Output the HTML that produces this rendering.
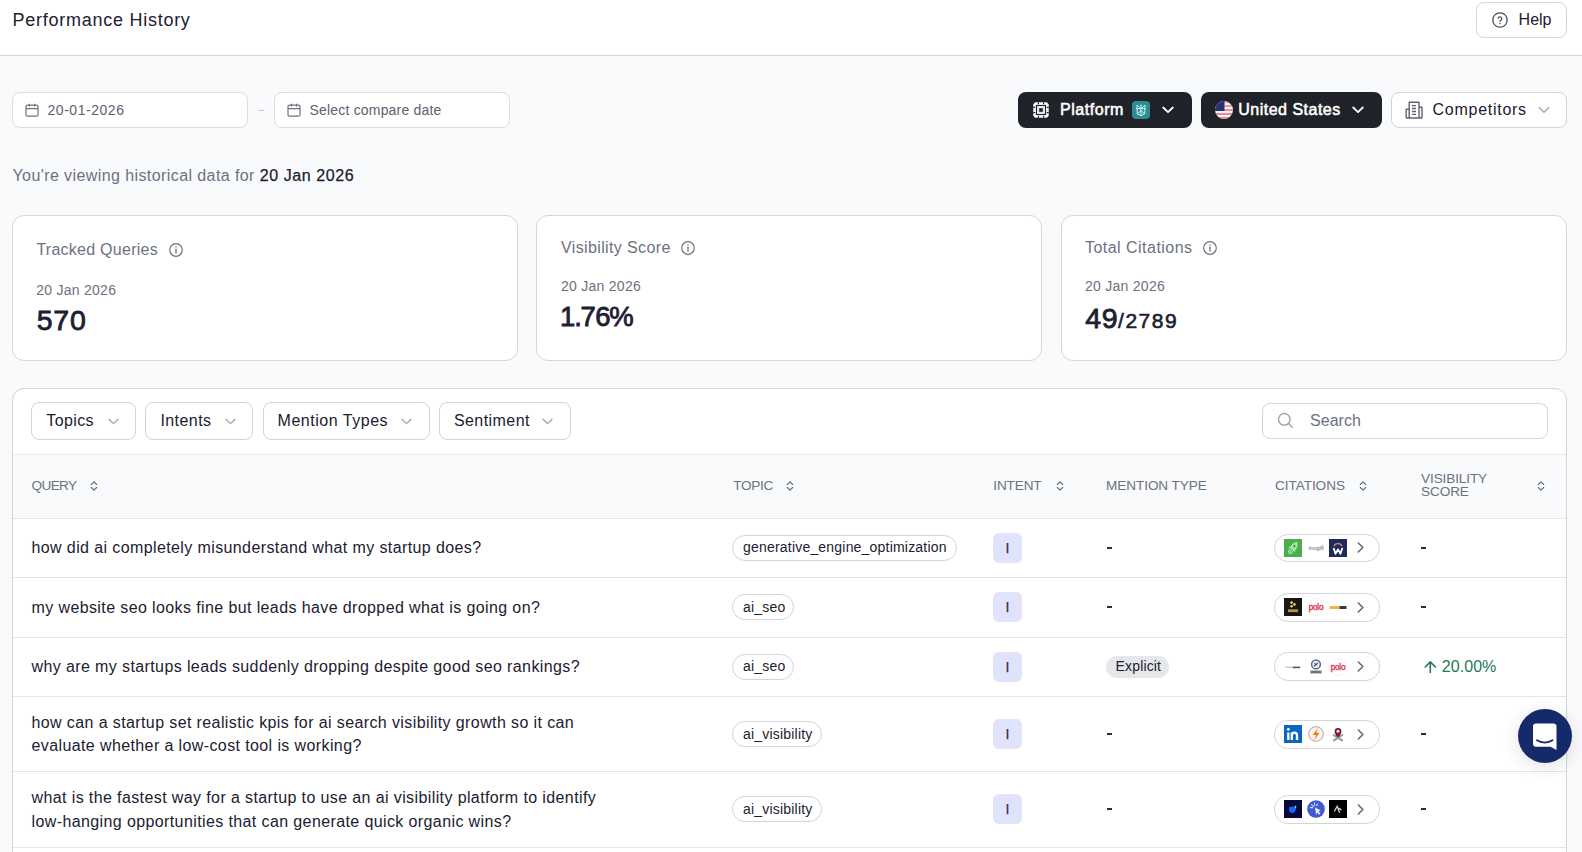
<!DOCTYPE html>
<html>
<head>
<meta charset="utf-8">
<style>
*{box-sizing:border-box;margin:0;padding:0}
html,body{width:1582px;height:852px;overflow:hidden}
body{background:#f9fafb;font-family:"Liberation Sans",sans-serif;color:#1f2937;position:relative}
.a{position:absolute}
.t{position:absolute;line-height:1;white-space:nowrap}
.hdr{position:absolute;left:0;top:0;width:1582px;height:56px;background:#fff;border-bottom:1px solid #d4d4d8}
.box{position:absolute;background:#fff;border:1px solid #dcdde0}
.dark{position:absolute;background:#1f2228;border-radius:8px}
.card{position:absolute;background:#fff;border:1px solid #d4d5da;border-radius:12px}
.g{color:#6b7280}
.pill{position:absolute;border:1px solid #d4d4d8;border-radius:14px;background:#fff}
.ib{position:absolute;width:29px;height:29px;background:#e0e3fb;border-radius:6px}
.row{position:absolute;left:13px;width:1553px;border-bottom:1px solid #e5e7eb;background:#fff}
svg{position:absolute;overflow:visible}
</style>
</head>
<body>
<!-- header -->
<div class="hdr"></div>
<div class="t" style="left:12.5px;top:11px;font-size:18px;letter-spacing:0.74px;color:#1c2030">Performance History</div>
<div class="box" style="left:1476px;top:2px;width:91px;height:36px;border-radius:8px;border-color:#d4d4d8"></div>
<svg style="left:1492px;top:12px" width="16" height="16" viewBox="0 0 16 16"><circle cx="8" cy="8" r="7.2" fill="none" stroke="#4b5058" stroke-width="1.3"/><path d="M6.1 6.2a1.9 1.9 0 0 1 3.7.5c0 1.3-1.8 1.6-1.8 2.6" fill="none" stroke="#4b5058" stroke-width="1.3" stroke-linecap="round"/><circle cx="8" cy="11.4" r="0.75" fill="#4b5058"/></svg>
<div class="t" style="left:1518.6px;top:11.5px;font-size:16px;color:#1c2030">Help</div>

<!-- date inputs -->
<div class="box" style="left:12px;top:92px;width:236px;height:36px;border-radius:8px"></div>
<svg style="left:25px;top:103px" width="14" height="14" viewBox="0 0 14 14"><rect x="1" y="2.2" width="12" height="11" rx="1.5" fill="none" stroke="#6b7280" stroke-width="1.2"/><path d="M1 5.6h12M4.4 0.8v2.8M9.6 0.8v2.8" stroke="#6b7280" stroke-width="1.2"/></svg>
<div class="t g" style="left:47.5px;top:103.1px;font-size:14px;letter-spacing:0.54px;color:#5b6270">20-01-2026</div>
<div class="a" style="left:258px;top:110px;width:6px;height:1px;background:#c4c8cf"></div>
<div class="box" style="left:274px;top:92px;width:236px;height:36px;border-radius:8px"></div>
<svg style="left:287px;top:103px" width="14" height="14" viewBox="0 0 14 14"><rect x="1" y="2.2" width="12" height="11" rx="1.5" fill="none" stroke="#6b7280" stroke-width="1.2"/><path d="M1 5.6h12M4.4 0.8v2.8M9.6 0.8v2.8" stroke="#6b7280" stroke-width="1.2"/></svg>
<div class="t g" style="left:309.5px;top:103.1px;font-size:14px;letter-spacing:0.19px;color:#5b6270">Select compare date</div>

<!-- right buttons -->
<div class="dark" style="left:1018px;top:92px;width:174px;height:36px"></div>
<svg style="left:1032px;top:101px" width="18" height="18" viewBox="0 0 18 18">
 <path d="M3.2 1.3h11.6l1.9 1.9v11.6l-1.9 1.9H3.2l-1.9-1.9V3.2z" fill="#fff"/><path d="M1.3 6.4h2M1.3 11.6h2M14.7 6.4h2M14.7 11.6h2M6.4 1.3v2M11.6 1.3v2M6.4 14.7v2M11.6 14.7v2" stroke="#1f2228" stroke-width="1.2"/><rect x="4.5" y="4.5" width="9" height="9" fill="none" stroke="#1f2228" stroke-width="1.2"/><rect x="5.6" y="5.6" width="6.8" height="6.8" fill="#e2e3e5"/><rect x="7.2" y="7.2" width="3.6" height="3.6" fill="#1f2228"/>
</svg>
<div class="t" style="left:1060px;top:102px;font-size:16px;-webkit-text-stroke:0.55px #fff;color:#fff;letter-spacing:0.55px">Platform</div>
<div class="a" style="left:1132px;top:101px;width:18px;height:18px;border-radius:4px;background:#2f8c92"></div>
<svg style="left:1132px;top:101px" width="18" height="18" viewBox="0 0 18 18"><path d="M5 4l4 3.6L13 4v3.6M5 4v3.6M4 7.6h10M5.2 7.6v5.2L9 9.6l3.8 3.2V7.6M9 3.4v11.4M5.2 12.8l3.8 1.8 3.8-1.8" fill="none" stroke="#c4f6f8" stroke-width="1" stroke-linejoin="round"/></svg>
<svg style="left:1162px;top:106px" width="12" height="8" viewBox="0 0 12 8"><path d="M1.2 1.5L6 6.2l4.8-4.7" fill="none" stroke="#fff" stroke-width="1.8" stroke-linecap="round" stroke-linejoin="round"/></svg>

<div class="dark" style="left:1201px;top:92px;width:181px;height:36px"></div>
<svg style="left:1215px;top:101px" width="18" height="18" viewBox="0 0 18 18">
 <defs><clipPath id="fc"><circle cx="9" cy="9" r="9"/></clipPath></defs>
 <g clip-path="url(#fc)">
  <rect width="18" height="18" fill="#f4f0f2"/>
  <rect y="0" width="18" height="2" fill="#e7a3ad"/><rect y="4" width="18" height="2" fill="#e59aa5"/><rect y="8" width="18" height="2" fill="#e08f9b"/><rect y="12" width="18" height="2" fill="#e38a96"/><rect y="16" width="18" height="2" fill="#e38a96"/>
  <rect width="9.5" height="10" fill="#2a3170"/>
 </g>
</svg>
<div class="t" style="left:1238.2px;top:102px;font-size:16px;-webkit-text-stroke:0.55px #fff;color:#fff;letter-spacing:0.5px">United States</div>
<svg style="left:1352px;top:106px" width="12" height="8" viewBox="0 0 12 8"><path d="M1.2 1.5L6 6.2l4.8-4.7" fill="none" stroke="#fff" stroke-width="1.8" stroke-linecap="round" stroke-linejoin="round"/></svg>

<div class="box" style="left:1391px;top:92px;width:176px;height:36px;border-radius:8px;border-color:#d4d4d8"></div>
<svg style="left:1405px;top:101px" width="18" height="18" viewBox="0 0 18 18"><path d="M4.2 17V1.2h9.8V17M4.2 8.3H1.2V17M14 6.3h3V17M1.2 17h15.8M7 4.6h4M7 7.5h4M7 10.5h4M7 13.4h4" fill="none" stroke="#5f646c" stroke-width="1.4" stroke-linejoin="round"/></svg>
<div class="t" style="left:1432.6px;top:102px;font-size:16px;color:#1c2030;letter-spacing:0.72px">Competitors</div>
<svg style="left:1538px;top:106px" width="12" height="8" viewBox="0 0 12 8"><path d="M1.2 1.5L6 6.2l4.8-4.7" fill="none" stroke="#a3a8b0" stroke-width="1.4" stroke-linecap="round" stroke-linejoin="round"/></svg>

<!-- viewing -->
<div class="t" style="left:12.5px;top:168.4px;font-size:16px;letter-spacing:0.41px;color:#6b7280">You're viewing historical data for <span style="color:#1c2030;letter-spacing:0.6px;-webkit-text-stroke:0.25px #1c2030">20 Jan 2026</span></div>

<!-- CARDS -->

<div class="card" style="left:12px;top:215px;width:506px;height:146px"></div>
<div class="t g" style="left:36.4px;top:242.4px;font-size:16px;letter-spacing:0.26px">Tracked Queries</div>
<svg style="left:168.5px;top:242.6px" width="14" height="14" viewBox="0 0 14 14"><circle cx="7" cy="7" r="6.3" fill="none" stroke="#6b7280" stroke-width="1.2"/><path d="M7 6.2v3.8" stroke="#6b7280" stroke-width="1.3" stroke-linecap="round"/><circle cx="7" cy="4.1" r="0.75" fill="#6b7280"/></svg>
<div class="t g" style="left:36.2px;top:283.1px;font-size:14px;letter-spacing:0.27px">20 Jan 2026</div>
<div class="t" style="left:36.8px;top:305.6px;font-size:28.5px;-webkit-text-stroke:0.8px #1c2030;color:#1c2030;letter-spacing:0.7px">570</div>

<div class="card" style="left:536px;top:215px;width:506px;height:146px"></div>
<div class="t g" style="left:561px;top:239.5px;font-size:16px;letter-spacing:0.37px">Visibility Score</div>
<svg style="left:681px;top:240.7px" width="14" height="14" viewBox="0 0 14 14"><circle cx="7" cy="7" r="6.3" fill="none" stroke="#6b7280" stroke-width="1.2"/><path d="M7 6.2v3.8" stroke="#6b7280" stroke-width="1.3" stroke-linecap="round"/><circle cx="7" cy="4.1" r="0.75" fill="#6b7280"/></svg>
<div class="t g" style="left:561px;top:278.9px;font-size:14px;letter-spacing:0.27px">20 Jan 2026</div>
<div class="t" style="left:560px;top:303px;font-size:27.5px;-webkit-text-stroke:0.8px #1c2030;color:#1c2030;letter-spacing:-0.6px"><span style="letter-spacing:-1.1px">1</span><span style="letter-spacing:-1.3px">.</span>7<span style="letter-spacing:-1.2px">6</span>%</div>

<div class="card" style="left:1061px;top:215px;width:506px;height:146px"></div>
<div class="t g" style="left:1085px;top:239.5px;font-size:16px;letter-spacing:0.47px">Total Citations</div>
<svg style="left:1203px;top:240.7px" width="14" height="14" viewBox="0 0 14 14"><circle cx="7" cy="7" r="6.3" fill="none" stroke="#6b7280" stroke-width="1.2"/><path d="M7 6.2v3.8" stroke="#6b7280" stroke-width="1.3" stroke-linecap="round"/><circle cx="7" cy="4.1" r="0.75" fill="#6b7280"/></svg>
<div class="t g" style="left:1085px;top:278.9px;font-size:14px;letter-spacing:0.27px">20 Jan 2026</div>
<div class="t" style="left:1085.2px;top:304px;font-size:28.5px;-webkit-text-stroke:0.8px #1c2030;color:#1c2030;letter-spacing:0.6px">49<span style="font-size:21px;-webkit-text-stroke:0.6px #1c2030;letter-spacing:1.5px">/2789</span></div>


<!-- TABLE -->
<div class="box" style="left:12px;top:388px;width:1555px;height:520px;border-radius:12px;border-color:#d4d4d8"></div>
<div class="box" style="left:31px;top:402px;width:105px;height:37.5px;border-radius:8px;border-color:#d4d4d8"></div><div class="t" style="left:46.3px;top:412.5px;font-size:16px;letter-spacing:0.38px;color:#1c2030">Topics</div><svg style="left:107.5px;top:417.5px" width="11" height="7" viewBox="0 0 11 7"><path d="M1 1.2l4.5 4.4L10 1.2" fill="none" stroke="#9ca3af" stroke-width="1.3" stroke-linecap="round" stroke-linejoin="round"/></svg><div class="box" style="left:145.4px;top:402px;width:108.0px;height:37.5px;border-radius:8px;border-color:#d4d4d8"></div><div class="t" style="left:160.4px;top:412.5px;font-size:16px;letter-spacing:0.43px;color:#1c2030">Intents</div><svg style="left:224.5px;top:417.5px" width="11" height="7" viewBox="0 0 11 7"><path d="M1 1.2l4.5 4.4L10 1.2" fill="none" stroke="#9ca3af" stroke-width="1.3" stroke-linecap="round" stroke-linejoin="round"/></svg><div class="box" style="left:263.2px;top:402px;width:166.40000000000003px;height:37.5px;border-radius:8px;border-color:#d4d4d8"></div><div class="t" style="left:277.6px;top:412.5px;font-size:16px;letter-spacing:0.52px;color:#1c2030">Mention Types</div><svg style="left:400.5px;top:417.5px" width="11" height="7" viewBox="0 0 11 7"><path d="M1 1.2l4.5 4.4L10 1.2" fill="none" stroke="#9ca3af" stroke-width="1.3" stroke-linecap="round" stroke-linejoin="round"/></svg><div class="box" style="left:439.3px;top:402px;width:132.09999999999997px;height:37.5px;border-radius:8px;border-color:#d4d4d8"></div><div class="t" style="left:453.9px;top:412.5px;font-size:16px;letter-spacing:0.44px;color:#1c2030">Sentiment</div><svg style="left:542.3px;top:417.5px" width="11" height="7" viewBox="0 0 11 7"><path d="M1 1.2l4.5 4.4L10 1.2" fill="none" stroke="#9ca3af" stroke-width="1.3" stroke-linecap="round" stroke-linejoin="round"/></svg><div class="box" style="left:1261.5px;top:403px;width:286.5px;height:35.5px;border-radius:8px;border-color:#d4d4d8"></div><svg style="left:1277px;top:412px" width="17" height="17" viewBox="0 0 17 17"><circle cx="7.3" cy="7.3" r="5.8" fill="none" stroke="#9ca3af" stroke-width="1.4"/><path d="M11.6 11.6l3.6 3.6" stroke="#9ca3af" stroke-width="1.4" stroke-linecap="round"/></svg><div class="t" style="left:1310px;top:412.5px;font-size:16px;letter-spacing:0.05px;color:#6b7280">Search</div><div class="a" style="left:13px;top:454px;width:1553px;height:65px;background:#f9fafb;border-top:1px solid #ebebee;border-bottom:1px solid #e5e5e7"></div><div class="t" style="left:31.6px;top:478.5px;font-size:13.6px;letter-spacing:-0.65px;color:#6b7280">QUERY</div><svg style="left:90px;top:481px" width="8" height="10" viewBox="0 0 8 10"><path d="M1.3 3.5L4 0.9l2.7 2.6M1.3 6.5L4 9.1l2.7-2.6" fill="none" stroke="#626873" stroke-width="1.1" stroke-linecap="round" stroke-linejoin="round"/></svg><div class="t" style="left:733.2px;top:478.5px;font-size:13.6px;letter-spacing:-0.3px;color:#6b7280">TOPIC</div><svg style="left:786px;top:481px" width="8" height="10" viewBox="0 0 8 10"><path d="M1.3 3.5L4 0.9l2.7 2.6M1.3 6.5L4 9.1l2.7-2.6" fill="none" stroke="#626873" stroke-width="1.1" stroke-linecap="round" stroke-linejoin="round"/></svg><div class="t" style="left:993.3px;top:478.5px;font-size:13.6px;letter-spacing:-0.15px;color:#6b7280">INTENT</div><svg style="left:1055.8px;top:481px" width="8" height="10" viewBox="0 0 8 10"><path d="M1.3 3.5L4 0.9l2.7 2.6M1.3 6.5L4 9.1l2.7-2.6" fill="none" stroke="#626873" stroke-width="1.1" stroke-linecap="round" stroke-linejoin="round"/></svg><div class="t" style="left:1106.1px;top:478.5px;font-size:13.6px;letter-spacing:-0.1px;color:#6b7280">MENTION TYPE</div><div class="t" style="left:1274.9px;top:478.5px;font-size:13.6px;letter-spacing:-0.05px;color:#6b7280">CITATIONS</div><svg style="left:1358.5px;top:481px" width="8" height="10" viewBox="0 0 8 10"><path d="M1.3 3.5L4 0.9l2.7 2.6M1.3 6.5L4 9.1l2.7-2.6" fill="none" stroke="#626873" stroke-width="1.1" stroke-linecap="round" stroke-linejoin="round"/></svg><div class="t" style="left:1421.1px;top:472.3px;font-size:13.6px;line-height:13px;letter-spacing:-0.13px;color:#6b7280">VISIBILITY<br>SCORE</div><svg style="left:1537px;top:481px" width="8" height="10" viewBox="0 0 8 10"><path d="M1.3 3.5L4 0.9l2.7 2.6M1.3 6.5L4 9.1l2.7-2.6" fill="none" stroke="#626873" stroke-width="1.1" stroke-linecap="round" stroke-linejoin="round"/></svg>
<div class="a" style="left:13px;top:519px;width:1553px;height:59px;background:#fff;border-bottom:1px solid #e5e5e7"></div><div class="t" style="left:31.5px;top:540.06px;font-size:16px;letter-spacing:0.39px;color:#1c2030">how did ai completely misunderstand what my startup does?</div><div class="pill" style="left:732px;top:534.75px;width:225px;height:26px;border-radius:13px"></div><div class="t" style="left:743px;top:540.30px;font-size:14px;letter-spacing:0.2px;color:#1c2030">generative_engine_optimization</div><div class="ib" style="left:993px;top:532.75px;width:28.5px;height:30px"></div><div class="t" style="left:1005.4px;top:540.85px;font-size:14px;color:#2f333c;-webkit-text-stroke:0.25px #2f333c">I</div><div class="a" style="left:1107px;top:547px;width:5px;height:2px;background:#2c2f37"></div><div class="pill" style="left:1274px;top:533.50px;width:105.5px;height:28.5px"></div><svg style="left:1284px;top:538.75px" width="18" height="18" viewBox="0 0 18 18"><rect width="18" height="18" fill="#4cae4f"/><g transform="rotate(35 9 9)"><path d="M9 2.2c2.3 1.8 3 4.6 2.6 8.6H6.4C6 6.8 6.7 4 9 2.2z" fill="#9fe39a" stroke="#c9f5c4" stroke-width=".6"/><circle cx="9" cy="6.6" r="1.1" fill="#3f9a42"/><path d="M6.4 8.6l-1.6 2.6h1.8M11.6 8.6l1.6 2.6h-1.8" fill="#9fe39a"/><path d="M7.3 12.3v2.6M9 12.3v3.6M10.7 12.3v2.6" stroke="#b6f0b0" stroke-width="1" stroke-linecap="round"/></g></svg><svg style="left:1306.5px;top:538.75px" width="18" height="18" viewBox="0 0 18 18"><rect width="18" height="18" fill="#fff"/><text x="1.8" y="11" font-family="Liberation Sans" font-size="4.6" font-weight="700" fill="#8a8a90">insight</text><circle cx="15.4" cy="7" r="1" fill="#e9a0b0"/></svg><svg style="left:1329px;top:538.75px" width="18" height="18" viewBox="0 0 18 18"><rect width="18" height="18" fill="#1b2b5e"/><path d="M5 7.2a4.3 4.3 0 0 1 8 0" fill="none" stroke="#d2745a" stroke-width="1.6"/><path d="M4.6 9l1.9 5.8 2.5-4.4 2.5 4.4L13.4 9" fill="none" stroke="#fff" stroke-width="1.8" stroke-linejoin="round"/></svg><svg style="left:1357px;top:542.25px" width="8" height="11" viewBox="0 0 8 11"><path d="M1.3 1l4.6 4.5-4.6 4.5" fill="none" stroke="#60656e" stroke-width="1.5" stroke-linecap="round" stroke-linejoin="round"/></svg><div class="a" style="left:1421px;top:547px;width:5px;height:2px;background:#2c2f37"></div><div class="a" style="left:13px;top:578px;width:1553px;height:60px;background:#fff;border-bottom:1px solid #e5e5e7"></div><div class="t" style="left:31.5px;top:599.56px;font-size:16px;letter-spacing:0.39px;color:#1c2030">my website seo looks fine but leads have dropped what is going on?</div><div class="pill" style="left:732px;top:594.30px;width:61.5px;height:26px;border-radius:13px"></div><div class="t" style="left:743px;top:599.85px;font-size:14px;letter-spacing:0.2px;color:#1c2030">ai_seo</div><div class="ib" style="left:993px;top:592.30px;width:28.5px;height:30px"></div><div class="t" style="left:1005.4px;top:600.40px;font-size:14px;color:#2f333c;-webkit-text-stroke:0.25px #2f333c">I</div><div class="a" style="left:1107px;top:606px;width:5px;height:2px;background:#2c2f37"></div><div class="pill" style="left:1274px;top:593.05px;width:105.5px;height:28.5px"></div><svg style="left:1284px;top:598.30px" width="18" height="18" viewBox="0 0 18 18"><rect width="18" height="18" fill="#191716"/><circle cx="7.6" cy="4.6" r="1.3" fill="#e9e24a"/><circle cx="10.4" cy="6.4" r="1.3" fill="#e9e24a"/><circle cx="7.6" cy="8.2" r="1.3" fill="#e9e24a"/><rect x="4" y="11.3" width="10" height="2.8" fill="#a89c3e"/></svg><svg style="left:1306.5px;top:598.30px" width="18" height="18" viewBox="0 0 18 18"><circle cx="9" cy="9" r="8.5" fill="#fff" stroke="#ececec" stroke-width=".8"/><text x="9" y="11.6" font-family="Liberation Sans" font-size="8.2" fill="#d63a52" stroke="#d63a52" stroke-width="0.35" text-anchor="middle" letter-spacing="-0.3">polo</text></svg><svg style="left:1329px;top:598.30px" width="18" height="18" viewBox="0 0 18 18"><rect width="18" height="18" fill="#fff"/><rect x="0.5" y="8" width="10" height="3" fill="#f4b63c"/><rect x="10.5" y="8" width="7" height="3" fill="#3a3a3a"/></svg><svg style="left:1357px;top:601.80px" width="8" height="11" viewBox="0 0 8 11"><path d="M1.3 1l4.6 4.5-4.6 4.5" fill="none" stroke="#60656e" stroke-width="1.5" stroke-linecap="round" stroke-linejoin="round"/></svg><div class="a" style="left:1421px;top:606px;width:5px;height:2px;background:#2c2f37"></div><div class="a" style="left:13px;top:638px;width:1553px;height:59px;background:#fff;border-bottom:1px solid #e5e5e7"></div><div class="t" style="left:31.5px;top:658.76px;font-size:16px;letter-spacing:0.39px;color:#1c2030">why are my startups leads suddenly dropping despite good seo rankings?</div><div class="pill" style="left:732px;top:653.50px;width:61.5px;height:26px;border-radius:13px"></div><div class="t" style="left:743px;top:659.05px;font-size:14px;letter-spacing:0.2px;color:#1c2030">ai_seo</div><div class="ib" style="left:993px;top:651.50px;width:28.5px;height:30px"></div><div class="t" style="left:1005.4px;top:659.60px;font-size:14px;color:#2f333c;-webkit-text-stroke:0.25px #2f333c">I</div><div class="a" style="left:1106px;top:655.50px;width:63px;height:22px;border-radius:11px;background:#e5e7eb"></div><div class="t" style="left:1115.6px;top:659.15px;font-size:14px;letter-spacing:0.15px;color:#1c2030">Explicit</div><div class="pill" style="left:1274px;top:652.25px;width:105.5px;height:28.5px"></div><svg style="left:1284px;top:657.50px" width="18" height="18" viewBox="0 0 18 18"><rect width="18" height="18" fill="#fff"/><path d="M1.5 9.2h8" stroke="#b8b8bc" stroke-width="1"/><path d="M9 9.4h7.2" stroke="#55555a" stroke-width="1.6"/></svg><svg style="left:1306.5px;top:657.50px" width="18" height="18" viewBox="0 0 18 18"><rect width="18" height="18" fill="#fff"/><circle cx="9" cy="6.4" r="4.4" fill="#e8edf2" stroke="#56708c" stroke-width="1.5"/><path d="M7 8.2c1.5-.4 3-2 3.6-3.6M7.4 5.4l1.6 1.2" stroke="#2f4866" stroke-width="1.2" fill="none"/><rect x="3.4" y="12.6" width="11.2" height="2.8" fill="#6a7480"/></svg><svg style="left:1329px;top:657.50px" width="18" height="18" viewBox="0 0 18 18"><circle cx="9" cy="9" r="8.5" fill="#fff" stroke="#ececec" stroke-width=".8"/><text x="9" y="11.6" font-family="Liberation Sans" font-size="8.2" fill="#d63a52" stroke="#d63a52" stroke-width="0.35" text-anchor="middle" letter-spacing="-0.3">polo</text></svg><svg style="left:1357px;top:661.00px" width="8" height="11" viewBox="0 0 8 11"><path d="M1.3 1l4.6 4.5-4.6 4.5" fill="none" stroke="#60656e" stroke-width="1.5" stroke-linecap="round" stroke-linejoin="round"/></svg><svg style="left:1423.5px;top:660.50px" width="13" height="12" viewBox="0 0 13 12"><path d="M6.3 11.5V1M1.2 6l5.1-5.1L11.4 6" fill="none" stroke="#237a52" stroke-width="1.6" stroke-linecap="round" stroke-linejoin="round"/></svg><div class="t" style="left:1441.8px;top:659.46px;font-size:16px;letter-spacing:0.05px;color:#237a52">20.00%</div><div class="a" style="left:13px;top:697px;width:1553px;height:75px;background:#fff;border-bottom:1px solid #e5e5e7"></div><div class="t" style="left:31.5px;top:711.31px;font-size:16px;line-height:23px;letter-spacing:0.39px;color:#1c2030">how can a startup set realistic kpis for ai search visibility growth so it can<br>evaluate whether a low-cost tool is working?</div><div class="pill" style="left:732px;top:721.30px;width:90px;height:26px;border-radius:13px"></div><div class="t" style="left:743px;top:726.85px;font-size:14px;letter-spacing:0.2px;color:#1c2030">ai_visibility</div><div class="ib" style="left:993px;top:719.30px;width:28.5px;height:30px"></div><div class="t" style="left:1005.4px;top:727.40px;font-size:14px;color:#2f333c;-webkit-text-stroke:0.25px #2f333c">I</div><div class="a" style="left:1107px;top:733px;width:5px;height:2px;background:#2c2f37"></div><div class="pill" style="left:1274px;top:720.05px;width:105.5px;height:28.5px"></div><svg style="left:1284px;top:725.30px" width="18" height="18" viewBox="0 0 18 18"><rect width="18" height="18" fill="#0a66c2"/><circle cx="4.3" cy="4.3" r="1.4" fill="#fff"/><path d="M4.3 7.5v7.5M7.8 7.5v7.5M7.8 10.6c0-2 1.2-3 2.7-3s2.5.9 2.5 2.9V15" fill="none" stroke="#fff" stroke-width="2.3"/></svg><svg style="left:1306.5px;top:725.30px" width="18" height="18" viewBox="0 0 18 18"><circle cx="9" cy="9" r="7.3" fill="#fff3ee" stroke="#cfb3b0" stroke-width="1.3"/><path d="M11 2.4L5.8 10.1h3.4L7.2 15.6l5.2-7.8H9.1z" fill="#ee7424"/></svg><svg style="left:1329px;top:725.30px" width="18" height="18" viewBox="0 0 18 18"><rect width="18" height="18" fill="#fff"/><path d="M4.2 9.6l9.6 6.2M13.8 9.6l-9.6 6.2" stroke="#8e9ca6" stroke-width="2"/><path d="M9 12.6c-2.2-2.5-3.4-4.4-3.4-6.2a3.4 3.4 0 0 1 6.8 0c0 1.8-1.2 3.7-3.4 6.2z" fill="#7b1a2c"/><circle cx="9" cy="6.3" r="1.5" fill="#fbe9ec"/></svg><svg style="left:1357px;top:728.80px" width="8" height="11" viewBox="0 0 8 11"><path d="M1.3 1l4.6 4.5-4.6 4.5" fill="none" stroke="#60656e" stroke-width="1.5" stroke-linecap="round" stroke-linejoin="round"/></svg><div class="a" style="left:1421px;top:733px;width:5px;height:2px;background:#2c2f37"></div><div class="a" style="left:13px;top:772px;width:1553px;height:76px;background:#fff;border-bottom:1px solid #e5e5e7"></div><div class="t" style="left:31.5px;top:785.56px;font-size:16px;line-height:24px;letter-spacing:0.39px;color:#1c2030">what is the fastest way for a startup to use an ai visibility platform to identify<br>low-hanging opportunities that can generate quick organic wins?</div><div class="pill" style="left:732px;top:796.30px;width:90px;height:26px;border-radius:13px"></div><div class="t" style="left:743px;top:801.85px;font-size:14px;letter-spacing:0.2px;color:#1c2030">ai_visibility</div><div class="ib" style="left:993px;top:794.30px;width:28.5px;height:30px"></div><div class="t" style="left:1005.4px;top:802.40px;font-size:14px;color:#2f333c;-webkit-text-stroke:0.25px #2f333c">I</div><div class="a" style="left:1107px;top:808px;width:5px;height:2px;background:#2c2f37"></div><div class="pill" style="left:1274px;top:795.05px;width:105.5px;height:28.5px"></div><svg style="left:1284px;top:800.30px" width="18" height="18" viewBox="0 0 18 18"><rect width="18" height="18" fill="#040b3a"/><path d="M5.2 7.2c1.8-.8 4.5-1 6.8-.5.4 2.6-.4 5-2.6 6.2-2.3.6-3.8-.6-4.3-2.4z" fill="#1f5ff5"/><path d="M11.2 5.6c.8.2 1.2 1 1 2.2l-1.4.3z" fill="#8fd7ff"/></svg><svg style="left:1306.5px;top:800.30px" width="18" height="18" viewBox="0 0 18 18"><circle cx="9" cy="9" r="8.8" fill="#3f5ad2"/><path d="M8 7.4l6 3.2-2.6.6 2.1 2.4-1.3 1.2-2.1-2.4-1 2.6z" fill="#eef1ff"/><path d="M6.6 6.2L4.4 4.9M7.8 5.2l-.4-2.2M5.6 7.6H3.4M9.6 5.6l.9-1.6" stroke="#dfe6ff" stroke-width="1.1" stroke-linecap="round"/></svg><svg style="left:1329px;top:800.30px" width="18" height="18" viewBox="0 0 18 18"><rect width="18" height="18" fill="#000"/><path d="M5.6 11l2.6-4.8 1.6 3.6M9 9.2l1.6-.6 1.4 1.2M9.4 10l1.2 2.2" fill="none" stroke="#cfcfcf" stroke-width="1.3" stroke-linecap="round"/></svg><svg style="left:1357px;top:803.80px" width="8" height="11" viewBox="0 0 8 11"><path d="M1.3 1l4.6 4.5-4.6 4.5" fill="none" stroke="#60656e" stroke-width="1.5" stroke-linecap="round" stroke-linejoin="round"/></svg><div class="a" style="left:1421px;top:808px;width:5px;height:2px;background:#2c2f37"></div><div class="a" style="left:13px;top:848px;width:1553px;height:10px;background:#fff"></div><div class="a" style="left:1518px;top:709px;width:54px;height:54px;border-radius:50%;background:#142a6a;box-shadow:0 4px 18px rgba(0,0,0,0.12)"></div><svg style="left:1533px;top:722.5px" width="24" height="28" viewBox="0 0 24 28"><path d="M3 0.5h17.5a3 3 0 0 1 3 3V27l-6-3.2H3a3 3 0 0 1-3-3V3.5a3 3 0 0 1 3-3z" fill="#fff"/><path d="M4 17.3c4.5 3 11 3 15.5 0" fill="none" stroke="#142a6a" stroke-width="1.8" stroke-linecap="round"/></svg>
</body>
</html>
